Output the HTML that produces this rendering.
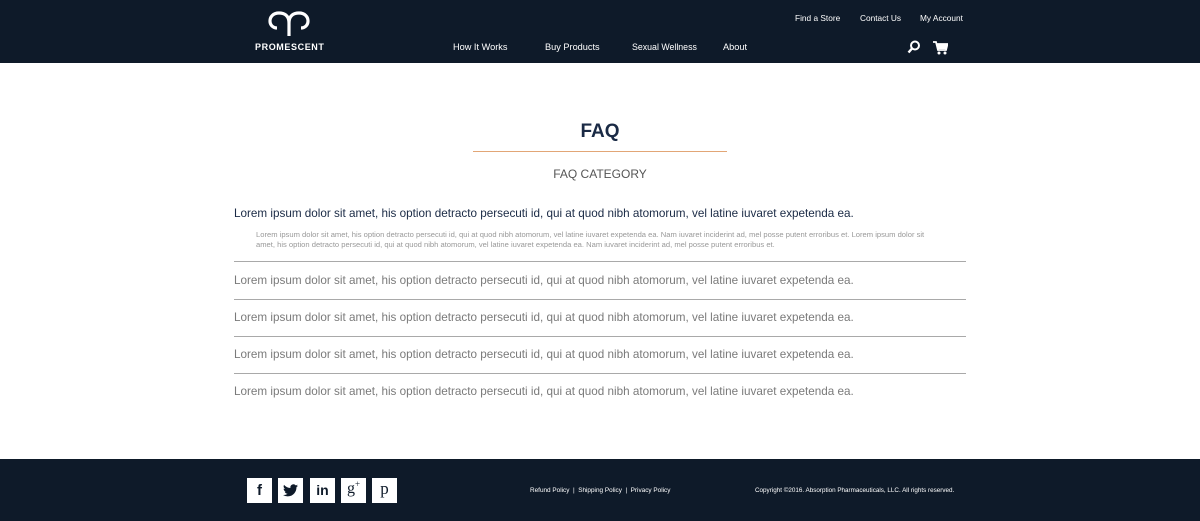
<!DOCTYPE html>
<html><head><meta charset="utf-8"><style>
*{margin:0;padding:0;box-sizing:border-box}
body{width:1200px;height:521px;background:#fff;font-family:"Liberation Sans",sans-serif;position:relative;overflow:hidden}
.hdr{position:absolute;left:0;top:0;width:1200px;height:63px;background:#0e1a29}
.ftr{position:absolute;left:0;top:459px;width:1200px;height:62px;background:#0e1a29}
.w{color:#fff;position:absolute;font-size:9px;white-space:nowrap}
.nav{font-size:9.2px}
.t{position:absolute;white-space:nowrap}
.line{position:absolute;left:234px;width:732px;height:1px;background:#a9a9a9}
.q{left:234px;font-size:11.7px;color:#7a7a7a}
.soc{position:absolute;top:478px;width:25px;height:25px;background:#fff;color:#0e1a29;font-weight:bold;font-size:15px;text-align:center;line-height:25px}
</style></head><body>
<div class="hdr">
<svg style="position:absolute;left:268px;top:11px" width="42" height="26" viewBox="0 0 42 26"><path d="M21 25 V12 C21 4 16 2 11 2 C5 2 2 6 2 10 C2 14 5 17 9 17 M21 12 C21 4 26 2 31 2 C37 2 40 6 40 10 C40 14 37 17 33 17" fill="none" stroke="#fff" stroke-width="3.2"/></svg>
<div class="w" style="left:255px;top:42px;font-weight:bold;font-size:9px;letter-spacing:0.6px">PROMESCENT</div>
<div class="w" style="left:795px;top:13px;font-size:8.3px">Find a Store</div>
<div class="w" style="left:860px;top:13px;font-size:8.3px">Contact Us</div>
<div class="w" style="left:920px;top:13px;font-size:8.3px">My Account</div>
<div class="w nav" style="left:453px;top:42px">How It Works</div>
<div class="w nav" style="left:545px;top:42px">Buy Products</div>
<div class="w nav" style="left:632px;top:42px;font-size:8.8px">Sexual Wellness</div>
<div class="w nav" style="left:723px;top:42px">About</div>
<svg style="position:absolute;left:907px;top:40px" width="14" height="14" viewBox="0 0 14 14"><circle cx="8" cy="5.5" r="4" fill="none" stroke="#fff" stroke-width="2"/><path d="M5 8.5 L1.5 12.5" stroke="#fff" stroke-width="2.4"/></svg>
<svg style="position:absolute;left:933px;top:41px" width="15" height="14" viewBox="0 0 15 14"><path d="M0 1 H3 L5 9 H13 L14.5 3 H4" fill="none" stroke="#fff" stroke-width="1.8"/><rect x="4" y="3" width="10" height="5" fill="#fff"/><circle cx="6" cy="12" r="1.5" fill="#fff"/><circle cx="12" cy="12" r="1.5" fill="#fff"/></svg>
</div>
<div class="t" style="left:0;width:1200px;text-align:center;top:121px;font-size:19px;font-weight:bold;color:#1a2a45">FAQ</div>
<div style="position:absolute;left:473px;top:151px;width:254px;height:1px;background:#e2a676"></div>
<div class="t" style="left:0;width:1200px;text-align:center;top:167px;font-size:12px;color:#555">FAQ CATEGORY</div>
<div class="t" style="left:234px;top:207px;font-size:11.7px;color:#1a2a45">Lorem ipsum dolor sit amet, his option detracto persecuti id, qui at quod nibh atomorum, vel latine iuvaret expetenda ea.</div>
<div class="t" style="left:256px;top:230px;font-size:7.6px;color:#999;line-height:9.5px">Lorem ipsum dolor sit amet, his option detracto persecuti id, qui at quod nibh atomorum, vel latine iuvaret expetenda ea. Nam iuvaret inciderint ad, mel posse putent erroribus et. Lorem ipsum dolor sit<br>amet, his option detracto persecuti id, qui at quod nibh atomorum, vel latine iuvaret expetenda ea. Nam iuvaret inciderint ad, mel posse putent erroribus et.</div>
<div class="line" style="top:261px"></div>
<div class="t q" style="top:274px">Lorem ipsum dolor sit amet, his option detracto persecuti id, qui at quod nibh atomorum, vel latine iuvaret expetenda ea.</div>
<div class="line" style="top:299px"></div>
<div class="t q" style="top:311px">Lorem ipsum dolor sit amet, his option detracto persecuti id, qui at quod nibh atomorum, vel latine iuvaret expetenda ea.</div>
<div class="line" style="top:336px"></div>
<div class="t q" style="top:348px">Lorem ipsum dolor sit amet, his option detracto persecuti id, qui at quod nibh atomorum, vel latine iuvaret expetenda ea.</div>
<div class="line" style="top:373px"></div>
<div class="t q" style="top:385px">Lorem ipsum dolor sit amet, his option detracto persecuti id, qui at quod nibh atomorum, vel latine iuvaret expetenda ea.</div>
<div class="ftr">
<div class="w" style="left:530px;top:28px;font-size:6.4px">Refund Policy &nbsp;|&nbsp; Shipping Policy &nbsp;|&nbsp; Privacy Policy</div>
<div class="w" style="left:755px;top:28px;font-size:6.3px">Copyright ©2016. Absorption Pharmaceuticals, LLC. All rights reserved.</div>
</div>
<div class="soc" style="left:247px">f</div>
<div class="soc" style="left:278px"><svg width="15" height="13" viewBox="0 0 24 20" style="margin-top:6px"><path d="M24 2.4c-.9.4-1.8.6-2.8.8 1-.6 1.8-1.6 2.2-2.7-1 .6-2 1-3.1 1.2A4.9 4.9 0 0 0 11.9 6 14 14 0 0 1 1.7.9a4.9 4.9 0 0 0 1.5 6.6c-.8 0-1.6-.2-2.2-.6 0 2.4 1.700 4.4 3.9 4.8-.7.2-1.5.2-2.2.1.6 2 2.4 3.4 4.6 3.4A9.9 9.9 0 0 1 0 17.2 14 14 0 0 0 7.5 19.4c9.1 0 14-7.5 14-14v-.6c1-.7 1.8-1.6 2.5-2.4z" fill="#0e1a29"/></svg></div>
<div class="soc" style="left:310px;font-size:14px">in</div>
<div class="soc" style="left:341px;font-family:'Liberation Serif',serif;font-weight:normal;font-size:16px;line-height:22px">g<span style="font-size:9px;vertical-align:top;line-height:12px">+</span></div>
<div class="soc" style="left:372px;font-weight:normal;font-family:'Liberation Serif',serif;font-size:17px;line-height:22px">p</div>
</body></html>
